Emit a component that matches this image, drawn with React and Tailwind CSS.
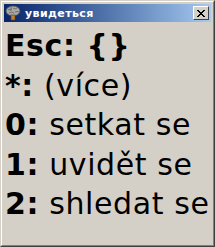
export default function App() {
  const lines = [
    ["Esc:", " {}", true],
    ["*:", " (více)", false],
    ["0:", " setkat se", false],
    ["1:", " uvidět se", false],
    ["2:", " shledat se", false],
  ];
  return (
    <div className="w-[215px] h-[247px] bg-[#d4d0c8] border border-t-[#d4d0c8] border-l-[#d4d0c8] border-r-[#404040] border-b-[#404040] overflow-hidden">
      <div className="w-full h-full border border-t-white border-l-white border-r-[#808080] border-b-[#808080] p-[2px] flex flex-col">
        <div className="h-[18px] flex items-center bg-gradient-to-r from-[#0a246a] to-[#a6caf0] pl-[1px] pr-[2px]">
          <svg width="16" height="16" viewBox="0 0 16 16" className="shrink-0">
            <ellipse cx="8" cy="6" rx="7" ry="5" fill="#a8a8a8" stroke="#505050" strokeWidth="0.8" />
            <path d="M3 5 Q5 3 7 5 M8 3 Q10 5 12 3 M4 8 Q7 6 9 8 M10 7 Q12 6 14 7 M6 2 Q7 4 5 6" stroke="#606060" strokeWidth="0.8" fill="none" />
            <rect x="6" y="10" width="4" height="5" fill="#c08030" stroke="#604010" strokeWidth="0.6" />
          </svg>
          <span className="ml-[4px] text-white font-bold text-[11px] leading-none [font-family:'DejaVu_Sans',sans-serif] tracking-[0.4px]">увидеться</span>
          <div className="ml-auto w-[16px] h-[14px] bg-[#d4d0c8] border border-t-white border-l-white border-r-[#404040] border-b-[#404040] flex items-center justify-center">
            <svg width="8" height="7" viewBox="0 0 8 7" shapeRendering="crispEdges">
              <path d="M0 0h2v1h-2z M6 0h2v1h-2z M1 1h2v1h-2z M5 1h2v1h-2z M2 2h4v1h-4z M3 3h2v1h-2z M2 4h4v1h-4z M1 5h2v1h-2z M5 5h2v1h-2z M0 6h2v1h-2z M6 6h2v1h-2z" fill="black" />
            </svg>
          </div>
        </div>
        <div className="flex flex-col pl-[1px] pt-[4px] text-black text-[30px] leading-[39.5px] [font-family:'DejaVu_Sans',sans-serif] whitespace-nowrap tracking-[0.6px]">
          {lines.map(([k, v, b], i) => (
            <div key={i}>
              <span className="font-bold">{k}</span>
              <span className={b ? "font-bold" : ""}>{v}</span>
            </div>
          ))}
        </div>
      </div>
    </div>
  );
}
